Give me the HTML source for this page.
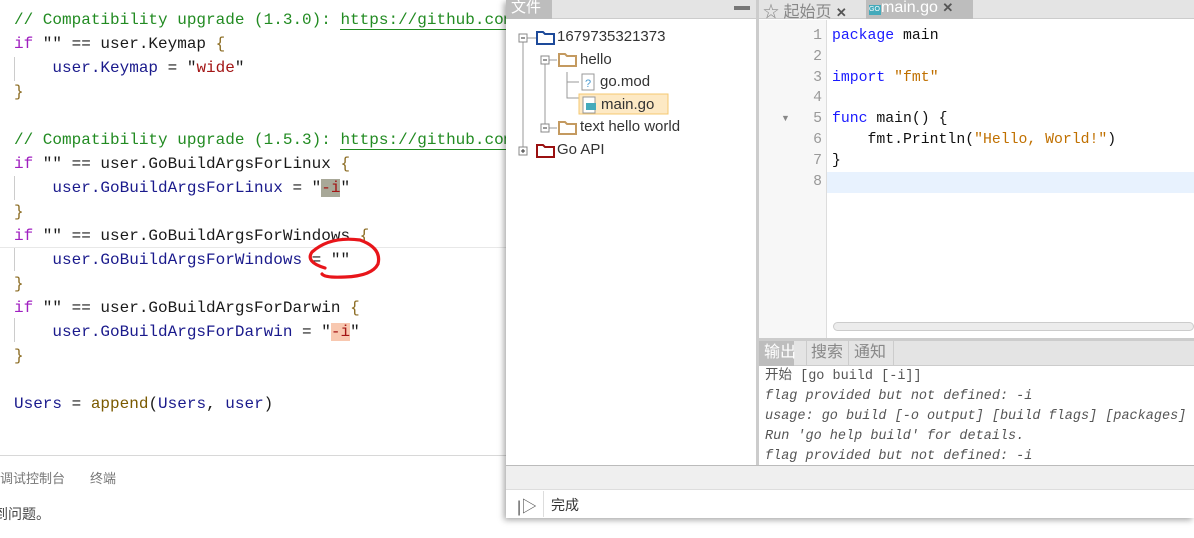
<!DOCTYPE html>
<html><head><meta charset="utf-8"><style>
*{margin:0;padding:0;box-sizing:border-box}
body{width:1194px;height:538px;overflow:hidden;background:#fff;position:relative;font-family:"Liberation Sans","Noto Sans CJK SC",sans-serif}
.a{position:absolute;white-space:pre}
.code{font-family:"Liberation Mono","DejaVu Sans Mono",monospace;font-size:16px;line-height:24px;color:#1a1a1a}
.k{color:#a020c0}.s{color:#a31515}.c{color:#228b22}.u{color:#1a1a8c}.fn{color:#7a5a00}.br{color:#8a6a20}
.lnk{color:#228b22;border-bottom:1.5px solid #228b22}
.ed{font-family:"Liberation Mono","DejaVu Sans Mono",monospace;font-size:14.8px;line-height:20.8px}
.out{font-family:"Liberation Mono","DejaVu Sans Mono",monospace;font-size:13.5px;line-height:20px;color:#555;font-style:italic}
</style></head><body>
<!-- left code -->
<div class="a code" style="left:14px;top:8px"><span class="c">// Compatibility upgrade (1.3.0): <span class="lnk">https://github.com</span></span>
<span class="k">if</span> "" == user.Keymap <span class="br">{</span>
    <span class="u">user.Keymap</span> = "<span class="s">wide</span>"
<span class="br">}</span>

<span class="c">// Compatibility upgrade (1.5.3): <span class="lnk">https://github.com</span></span>
<span class="k">if</span> "" == user.GoBuildArgsForLinux <span class="br">{</span>
    <span class="u">user.GoBuildArgsForLinux</span> = "<span class="s" style="background:#a8a898">-i</span>"
<span class="br">}</span>
<span class="k">if</span> "" == user.GoBuildArgsForWindows <span class="br">{</span>
    <span class="u">user.GoBuildArgsForWindows</span> = ""
<span class="br">}</span>
<span class="k">if</span> "" == user.GoBuildArgsForDarwin <span class="br">{</span>
    <span class="u">user.GoBuildArgsForDarwin</span> = "<span class="s" style="background:#f8c8b0">-i</span>"
<span class="br">}</span>

<span class="u">Users</span> = <span class="fn">append</span>(<span class="u">Users</span>, <span class="u">user</span>)</div>
<div class="a" style="left:14px;top:57px;width:1px;height:24px;background:#ccc"></div>
<div class="a" style="left:14px;top:176px;width:1px;height:24px;background:#ccc"></div>
<div class="a" style="left:14px;top:247px;width:1px;height:24px;background:#ccc"></div>
<div class="a" style="left:14px;top:318px;width:1px;height:24px;background:#ccc"></div>
<div class="a" style="left:0;top:247px;width:506px;height:1px;background:#e8e8e8"></div>
<div class="a" style="left:0;top:455px;width:506px;height:1px;background:#d8d8d8"></div>
<div class="a" style="left:0;top:468px;font-size:13px;color:#777">调试控制台</div>
<div class="a" style="left:90px;top:468px;font-size:13px;color:#777">终端</div>
<div class="a" style="left:0;top:504px;font-size:14px;color:#444;margin-left:-6px">到问题。</div>
<svg class="a" style="left:0;top:0" width="506" height="300"><path d="M325 268 Q305 262 312 252 Q330 236 360 240 Q382 248 378 264 Q372 276 345 277 Q325 278 322 274" fill="none" stroke="#e8151a" stroke-width="3.2" stroke-linecap="round"/></svg>

<!-- right window -->
<div class="a" style="left:506px;top:0;width:688px;height:518px;background:#fff;box-shadow:-2px 2px 6px rgba(0,0,0,.35)"></div>
<div class="a" style="left:506px;top:0;width:250px;height:19px;background:#e4e4e4;border-bottom:1px solid #ccc"></div>
<div class="a" style="left:506px;top:0;width:46px;height:19px;background:#bdbdbd;color:#fff;font-size:15px;line-height:16px;padding-left:5px">文件</div>
<div class="a" style="left:734px;top:6px;width:16px;height:4px;background:#777"></div>
<div class="a" style="left:756px;top:0;width:3px;height:465px;background:#ccc"></div>
<div class="a" style="left:759px;top:0;width:435px;height:19px;background:#e4e4e4;border-bottom:1px solid #ccc"></div>
<div class="a" style="left:763px;top:-2px;font-size:16px;color:#888">☆ 起始页 <b style="color:#555;font-size:13px">✕</b></div>
<div class="a" style="left:866px;top:0;width:107px;height:19px;background:#bdbdbd;color:#fff;font-size:16px;line-height:16px;padding-left:3px"><span style="display:inline-block;width:12px;height:10px;background:#4ab;font-size:7px;line-height:10px;color:#fff;vertical-align:1px">GO</span>main.go <b style="color:#555;font-size:13px">✕</b></div>

<!-- tree -->
<svg class="a" style="left:506px;top:20px" width="250" height="150">
<g stroke="#999" fill="none"><path d="M17 18V131M17 18h14M39 40V108M39 40h12M39 108h12M61 52V78h12M61 62h12"/></g>
<g fill="#fff" stroke="#888"><rect x="13" y="14" width="8" height="8"/><rect x="35" y="36" width="8" height="8"/><rect x="35" y="104" width="8" height="8"/><rect x="13" y="127" width="8" height="8"/></g>
<g stroke="#333"><path d="M15 18h4M37 40h4M37 108h4M15 131h4M17 129v4"/></g>
<path d="M31 12h6l2 2h9v10h-17z" fill="#fff" stroke="#1d4a9a" stroke-width="2"/>
<path d="M53 34h6l2 2h9v10h-17z" fill="#fff" stroke="#c49a60" stroke-width="2"/>
<path d="M53 102h6l2 2h9v10h-17z" fill="#fff" stroke="#c49a60" stroke-width="2"/>
<path d="M31 125h6l2 2h9v10h-17z" fill="#fff" stroke="#9a1010" stroke-width="2"/>
<rect x="76" y="54" width="12" height="16" fill="#fff" stroke="#999"/><text x="79" y="67" font-size="11" fill="#4a9ad0" font-family="Liberation Sans">?</text>
<rect x="73" y="74" width="89" height="20" fill="#fde9c4" stroke="#f5c870"/>
<rect x="77" y="77" width="12" height="16" fill="#fff" stroke="#999"/><rect x="80" y="83" width="10" height="7" fill="#4ab"/>
</svg>
<div class="a" style="left:557px;top:28px;font-size:15px;color:#333">1679735321373</div>
<div class="a" style="left:580px;top:51px;font-size:15px;color:#333">hello</div>
<div class="a" style="left:600px;top:73px;font-size:15px;color:#333">go.mod</div>
<div class="a" style="left:601px;top:96px;font-size:15px;color:#333">main.go</div>
<div class="a" style="left:580px;top:118px;font-size:15px;color:#333">text hello world</div>
<div class="a" style="left:557px;top:141px;font-size:15px;color:#333">Go API</div>

<!-- editor -->
<div class="a" style="left:759px;top:20px;width:68px;height:318px;background:#f7f7f7;border-right:1px solid #ddd"></div>
<div class="a" style="left:827px;top:172px;width:367px;height:21px;background:#e8f2fe"></div>
<div class="a ed" style="left:800px;top:26px;color:#999;text-align:right;width:22px">1
2
3
4
5
6
7
8</div>
<div class="a" style="left:781px;top:113px;font-size:9px;color:#888">▼</div>
<div class="a ed" style="left:832px;top:26px;color:#111"><span style="color:#1a1aff">package</span> main

<span style="color:#1a1aff">import</span> <span style="color:#c07000">"fmt"</span>

<span style="color:#1a1aff">func</span> main() {
    fmt.Println(<span style="color:#c07000">"Hello, World!"</span>)
}</div>
<div class="a" style="left:833px;top:322px;width:361px;height:9px;border:1px solid #ccc;border-radius:5px;background:#ececec"></div>
<div class="a" style="left:759px;top:338px;width:435px;height:3px;background:#ccc"></div>
<!-- output -->
<div class="a" style="left:759px;top:341px;width:435px;height:25px;background:#e4e4e4;border-bottom:1px solid #ccc"></div>
<div class="a" style="left:759px;top:341px;width:35px;height:25px;background:#bdbdbd;color:#fff;font-size:16px;line-height:24px;padding-left:5px">输出</div>
<div class="a" style="left:806px;top:341px;width:43px;height:25px;border-left:1px solid #ccc;border-right:1px solid #ccc;color:#888;font-size:16px;line-height:24px;padding-left:4px">搜索</div>
<div class="a" style="left:850px;top:341px;width:44px;height:25px;border-right:1px solid #ccc;color:#888;font-size:16px;line-height:24px;padding-left:4px">通知</div>
<div class="a out" style="left:765px;top:367px;width:429px;height:98px;overflow:hidden"><span style="font-style:normal">开始 [go build [-i]]</span>
flag provided but not defined: -i
usage: go build [-o output] [build flags] [packages]
Run 'go help build' for details.
flag provided but not defined: -i</div>
<div class="a" style="left:506px;top:465px;width:688px;height:1px;background:#bbb"></div>
<div class="a" style="left:506px;top:466px;width:688px;height:24px;background:#efefef;border-bottom:1px solid #ddd"></div>
<div class="a" style="left:543px;top:491px;width:1px;height:26px;background:#ddd"></div>
<div class="a" style="left:517px;top:493px;font-size:16px;color:#555">|▷</div>
<div class="a" style="left:551px;top:495px;font-size:14px;color:#333">完成</div>
</body></html>
